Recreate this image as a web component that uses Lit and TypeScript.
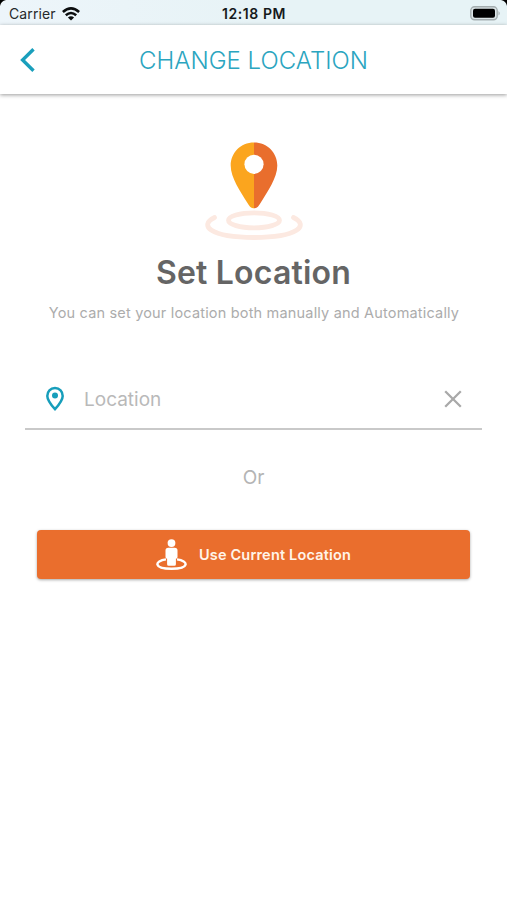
import { LitElement, html, css } from "lit";
import { customElement } from "lit/decorators.js";

@customElement("app-root")
export class AppRoot extends LitElement {
  static styles = css`
    :host { display: block; height: 900px; background: #fff; overflow: hidden;
      font-family: Inter, "Liberation Sans", sans-serif; }
    * { box-sizing: border-box; }
    svg { display: block; flex: none; }
    .screen { display: flex; flex-direction: column; height: 900px; }
    .status { height: 25px; background: linear-gradient(90deg, #edf5fa, #e7f3f6 50%); position: relative; display: grid;
      grid-template-columns: 1fr auto 1fr; align-items: center; padding: 2px 6px 0 9px;
      font-size: 14px; line-height: 23px; color: #26292b; }
    .carrier { display: flex; align-items: center; gap: 6px; letter-spacing: 0.1px; }
    .time { font-weight: 600; color: #16191b; font-size: 14px; letter-spacing: 0.55px; margin-left: -2px; }
    .battery { justify-self: end; }
    .corner { position: absolute; top: 0; }
    .left { left: 0; }
    .right { right: 0; }
    .nav { height: 69px; display: grid; grid-template-columns: 60px 1fr 60px; align-items: center;
      background: #fff; box-shadow: 0 1px 4px rgba(0,0,0,.4); color: #2ba5bf; z-index: 1; }
    .back { padding-left: 20px; }
    .nav h1 { margin: 0; padding-top: 2px; text-align: center; font-size: 24px; font-weight: 300; white-space: nowrap; line-height: 30px; }
    .main { display: flex; flex-direction: column; align-items: center; padding-top: 47px; }
    h2 { margin: 12px 0 0; font-size: 32px; line-height: 40px; font-weight: 600; letter-spacing: 0.2px; color: #656565; white-space: nowrap; }
    .sub { margin: 10px 0 0; padding-left: 1px; font-size: 14.5px; line-height: 20px; letter-spacing: 0.18px; color: #acacac; white-space: nowrap; }
    .field { margin-top: 47px; width: 457px; height: 60px; border-bottom: 2px solid #c9c9c9; padding: 0 20px;
      display: flex; align-items: center; color: #b9b9b9; }
    .placeholder { flex: 1; padding: 2px 0 0 19px; font-size: 19px; line-height: 24px; }
    .or { margin-top: 36px; font-size: 19px; line-height: 24px; color: #b4b4b4; }
    button { margin: 40px 0 0; padding: 0; width: 433px; height: 49px; border: 0; border-radius: 4px;
      background: #ea6e2d; box-shadow: 0 1px 3px rgba(0,0,0,.35); color: #fff4e9; font: 600 14.5px/20px Inter, "Liberation Sans", sans-serif; letter-spacing: 0.18px;
      display: flex; align-items: center; justify-content: center; gap: 12px; }
  `;

  render() {
    return html`<div class="screen">
      <div class="status">
        <svg class="corner left" width="7" height="7"><path d="M0 0H6Q1 1 0 6Z" fill="#000"/></svg>
        <div class="carrier"><span>Carrier</span>
          <svg width="18" height="14" viewBox="0 0 18 14"><g fill="none" stroke="#0b0d0e" stroke-width="2.6"><path d="M.9 4.9Q9-2.1 17.1 4.9"/><path d="M3.8 8.2Q9 3.8 14.2 8.2"/></g><path d="M5.9 10.5Q9 8.1 12.1 10.5L9 13.6Z" fill="#0b0d0e"/></svg>
        </div>
        <div class="time">12:18 PM</div>
        <svg class="battery" width="31" height="15" viewBox="0 0 31 15"><rect x=".8" y=".8" width="26.4" height="13" rx="3.7" fill="#dce5e7" stroke="#a4adaf" stroke-width="1.4"/><rect x="3" y="2.8" width="22" height="9" rx="2" fill="#000"/><path d="M28.5 5Q31 7.3 28.5 9.6Z" fill="#a4adaf"/></svg>
        <svg class="corner right" width="7" height="7"><path d="M7 0H1Q6 1 7 6Z" fill="#000"/></svg>
      </div>
      <div class="nav">
        <svg class="back" width="36" height="24" viewBox="0 0 16 24"><path d="M13.5 1.2L2.6 12L13.5 22.8" fill="none" stroke="#1a9fbc" stroke-width="3.4"/></svg>
        <h1>CHANGE LOCATION</h1>
      </div>
      <div class="main">
        <svg width="100" height="100" viewBox="0 0 100 100"><g fill="none" stroke="#fce9e1" stroke-width="4.8" stroke-linecap="round"><ellipse cx="50" cy="79.3" rx="25.5" ry="7.5"/><path d="M10.5 76.5C-5 84 5 96.5 50 96.5S105 84 89.5 76.5"/></g>
          <path d="M50 1.5C36.5 1.5 26.7 12 26.7 24.5C26.7 37 36.5 50.5 43.8 62.5C46 66.3 47.5 67.2 50 67.2Z" fill="#fba51e"/>
          <path d="M50 1.5C63.5 1.5 73.3 12 73.3 24.5C73.3 37 63.5 50.5 56.2 62.5C54 66.3 52.5 67.2 50 67.2Z" fill="#e96e2d"/><circle cx="50" cy="23.3" r="9.6" fill="#fff"/></svg>
        <h2>Set Location</h2>
        <p class="sub">You can set your location both manually and Automatically</p>
        <div class="field">
          <svg width="20" height="26" viewBox="0 0 20 26"><path d="M10 2.1C5.4 2.1 2.3 5.5 2.3 9.9C2.3 14.5 6.1 18.8 10 23.2C13.9 18.8 17.7 14.5 17.7 9.9C17.7 5.5 14.6 2.1 10 2.1Z" fill="none" stroke="#179ebb" stroke-width="2.5"/><circle cx="10" cy="9.5" r="3" fill="#179ebb"/></svg>
          <span class="placeholder">Location</span>
          <svg width="18" height="18" viewBox="0 0 18 18"><path d="M1.2 1.2L16.8 16.8M16.8 1.2L1.2 16.8" stroke="#a9a9a9" stroke-width="2.3"/></svg>
        </div>
        <div class="or">Or</div>
        <button><svg width="31" height="32" viewBox="0 0 31 32"><path d="M10 20.4C-1.8 21.8-2.8 29.7 15.5 29.7S32.8 21.8 21 20.4" fill="none" stroke="#fff" stroke-width="2.4"/><circle cx="15.5" cy="4.1" r="3.9" fill="#fff"/><path d="M12.2 8.8H18.8Q21.5 8.8 21.5 11.5V17.9Q21.5 19.5 19.9 19.7V25.2Q19.9 26.7 18.4 26.7H12.6Q11.1 26.7 11.1 25.2V19.7Q9.5 19.5 9.5 17.9V11.5Q9.5 8.8 12.2 8.8Z" fill="#fff"/></svg><span>Use Current Location</span></button>
      </div>
    </div>`;
  }
}
